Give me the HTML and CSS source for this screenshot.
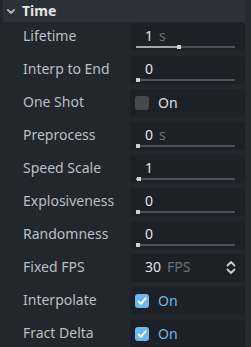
FILE: index.html
```html
<!DOCTYPE html>
<html>
<head>
<meta charset="utf-8">
<link rel="stylesheet" href="styles.css">
</head>
<body>
<div class="page">
  <div class="inspector">
    <div class="category">
      <svg class="chev" width="8" height="5" viewBox="0 0 8 5"><path d="M1 1 L4 4 L7 1" fill="none" stroke="#aeb1b6" stroke-width="1.8" stroke-linecap="round" stroke-linejoin="round"/></svg>
      <span class="cat-title">Time</span>
    </div>

    <div class="row">
      <div class="label">Lifetime</div>
      <div class="field slider">
        <div class="value"><span class="num">1</span><span class="suffix">s</span></div>
        <div class="track"><div class="fill" style="width:41px"></div><div class="grab" style="left:41px"></div></div>
      </div>
    </div>

    <div class="row">
      <div class="label">Interp to End</div>
      <div class="field slider">
        <div class="value"><span class="num">0</span></div>
        <div class="track"><div class="fill" style="width:0px"></div><div class="grab" style="left:0px"></div></div>
      </div>
    </div>

    <div class="row">
      <div class="label">One Shot</div>
      <div class="field check">
        <span class="box"></span><span class="on">On</span>
      </div>
    </div>

    <div class="row">
      <div class="label">Preprocess</div>
      <div class="field slider">
        <div class="value"><span class="num">0</span><span class="suffix">s</span></div>
        <div class="track"><div class="fill" style="width:0px"></div><div class="grab" style="left:0px"></div></div>
      </div>
    </div>

    <div class="row">
      <div class="label">Speed Scale</div>
      <div class="field slider">
        <div class="value"><span class="num">1</span></div>
        <div class="track"><div class="fill" style="width:1px"></div><div class="grab" style="left:1px"></div></div>
      </div>
    </div>

    <div class="row">
      <div class="label">Explosiveness</div>
      <div class="field slider">
        <div class="value"><span class="num">0</span></div>
        <div class="track"><div class="fill" style="width:0px"></div><div class="grab" style="left:0px"></div></div>
      </div>
    </div>

    <div class="row">
      <div class="label">Randomness</div>
      <div class="field slider">
        <div class="value"><span class="num">0</span></div>
        <div class="track"><div class="fill" style="width:0px"></div><div class="grab" style="left:0px"></div></div>
      </div>
    </div>

    <div class="row">
      <div class="label">Fixed FPS</div>
      <div class="field spin">
        <div class="value"><span class="num">30</span><span class="suffix">FPS</span></div>
        <svg class="updown" width="10" height="15" viewBox="0 0 10 15"><path d="M1.5 5.5 L5 2 L8.5 5.5 M1.5 9.5 L5 13 L8.5 9.5" fill="none" stroke="#c9cbce" stroke-width="1.8" stroke-linecap="round" stroke-linejoin="round"/></svg>
      </div>
    </div>

    <div class="row">
      <div class="label">Interpolate</div>
      <div class="field check">
        <span class="box checked"><svg width="14" height="14" viewBox="0 0 14 14"><path d="M3.5 7.3 L6 9.8 L10.5 4.3" fill="none" stroke="#ffffff" stroke-width="1.9" stroke-linecap="round" stroke-linejoin="round"/></svg></span><span class="on active">On</span>
      </div>
    </div>

    <div class="row">
      <div class="label">Fract Delta</div>
      <div class="field check">
        <span class="box checked"><svg width="14" height="14" viewBox="0 0 14 14"><path d="M3.5 7.3 L6 9.8 L10.5 4.3" fill="none" stroke="#ffffff" stroke-width="1.9" stroke-linecap="round" stroke-linejoin="round"/></svg></span><span class="on active">On</span>
      </div>
    </div>
  </div>
  <div class="scrollstrip"></div>
</div>
</body>
</html>
```

FILE: styles.css
```css
html, body {
  margin: 0;
  padding: 0;
  background: #22262d;
  font-family: "Noto Sans", "Open Sans", sans-serif;
  font-size: 14px;
  overflow: hidden;
}

.page {
  display: flex;
  width: 251px;
  height: 347px;
}

.inspector {
  flex: 1;
  padding-left: 3px;
  display: flex;
  flex-direction: column;
}

.scrollstrip {
  width: 6px;
  background: #262a31;
}

.category {
  height: 23px;
  background: #2c3038;
  display: flex;
  align-items: center;
}

.chev {
  margin-left: 4px;
  margin-right: 7px;
  margin-top: 1px;
}

.cat-title {
  font-weight: bold;
  color: #e4e5e7;
  line-height: 22px;
}

.row {
  display: grid;
  grid-template-columns: 127px 115px;
  height: 28px;
  margin-top: 5px;
  flex-shrink: 0;
}

.category + .row {
  margin-top: 1px;
}

.label {
  padding-left: 20px;
  color: #bdbfc3;
  line-height: 26px;
  white-space: nowrap;
}

.field {
  background: #1d2127;
  border-radius: 3px;
}

.slider, .spin {
  display: flex;
  flex-direction: column;
  padding-top: 3px;
  box-sizing: border-box;
}

.value {
  height: 20px;
  line-height: 19px;
  padding-left: 15px;
  white-space: nowrap;
}

.num {
  color: #e2e3e5;
}

.suffix {
  color: #6c7077;
  margin-left: 6px;
}

.track {
  position: relative;
  height: 2px;
  margin: 0 10px 0 6px;
  background: #4d5159;
}

.fill {
  height: 2px;
  background: #a2a5aa;
}

.grab {
  position: absolute;
  top: -1px;
  width: 4px;
  height: 4px;
  background: #cfd0d2;
}

.spin {
  flex-direction: row;
  align-items: flex-start;
  justify-content: space-between;
}

.updown {
  margin-right: 9px;
  margin-top: 3px;
}

.check {
  display: flex;
  align-items: center;
  padding-left: 5px;
}

.box {
  width: 14px;
  height: 14px;
  border-radius: 3px;
  background: #46494f;
  display: block;
  margin-right: 9px;
}

.box svg {
  display: block;
}

.box.checked {
  background: #6db7ef;
}

.on {
  color: #dcdde0;
  line-height: 26px;
}

.on.active {
  color: #71b6ea;
}
```
